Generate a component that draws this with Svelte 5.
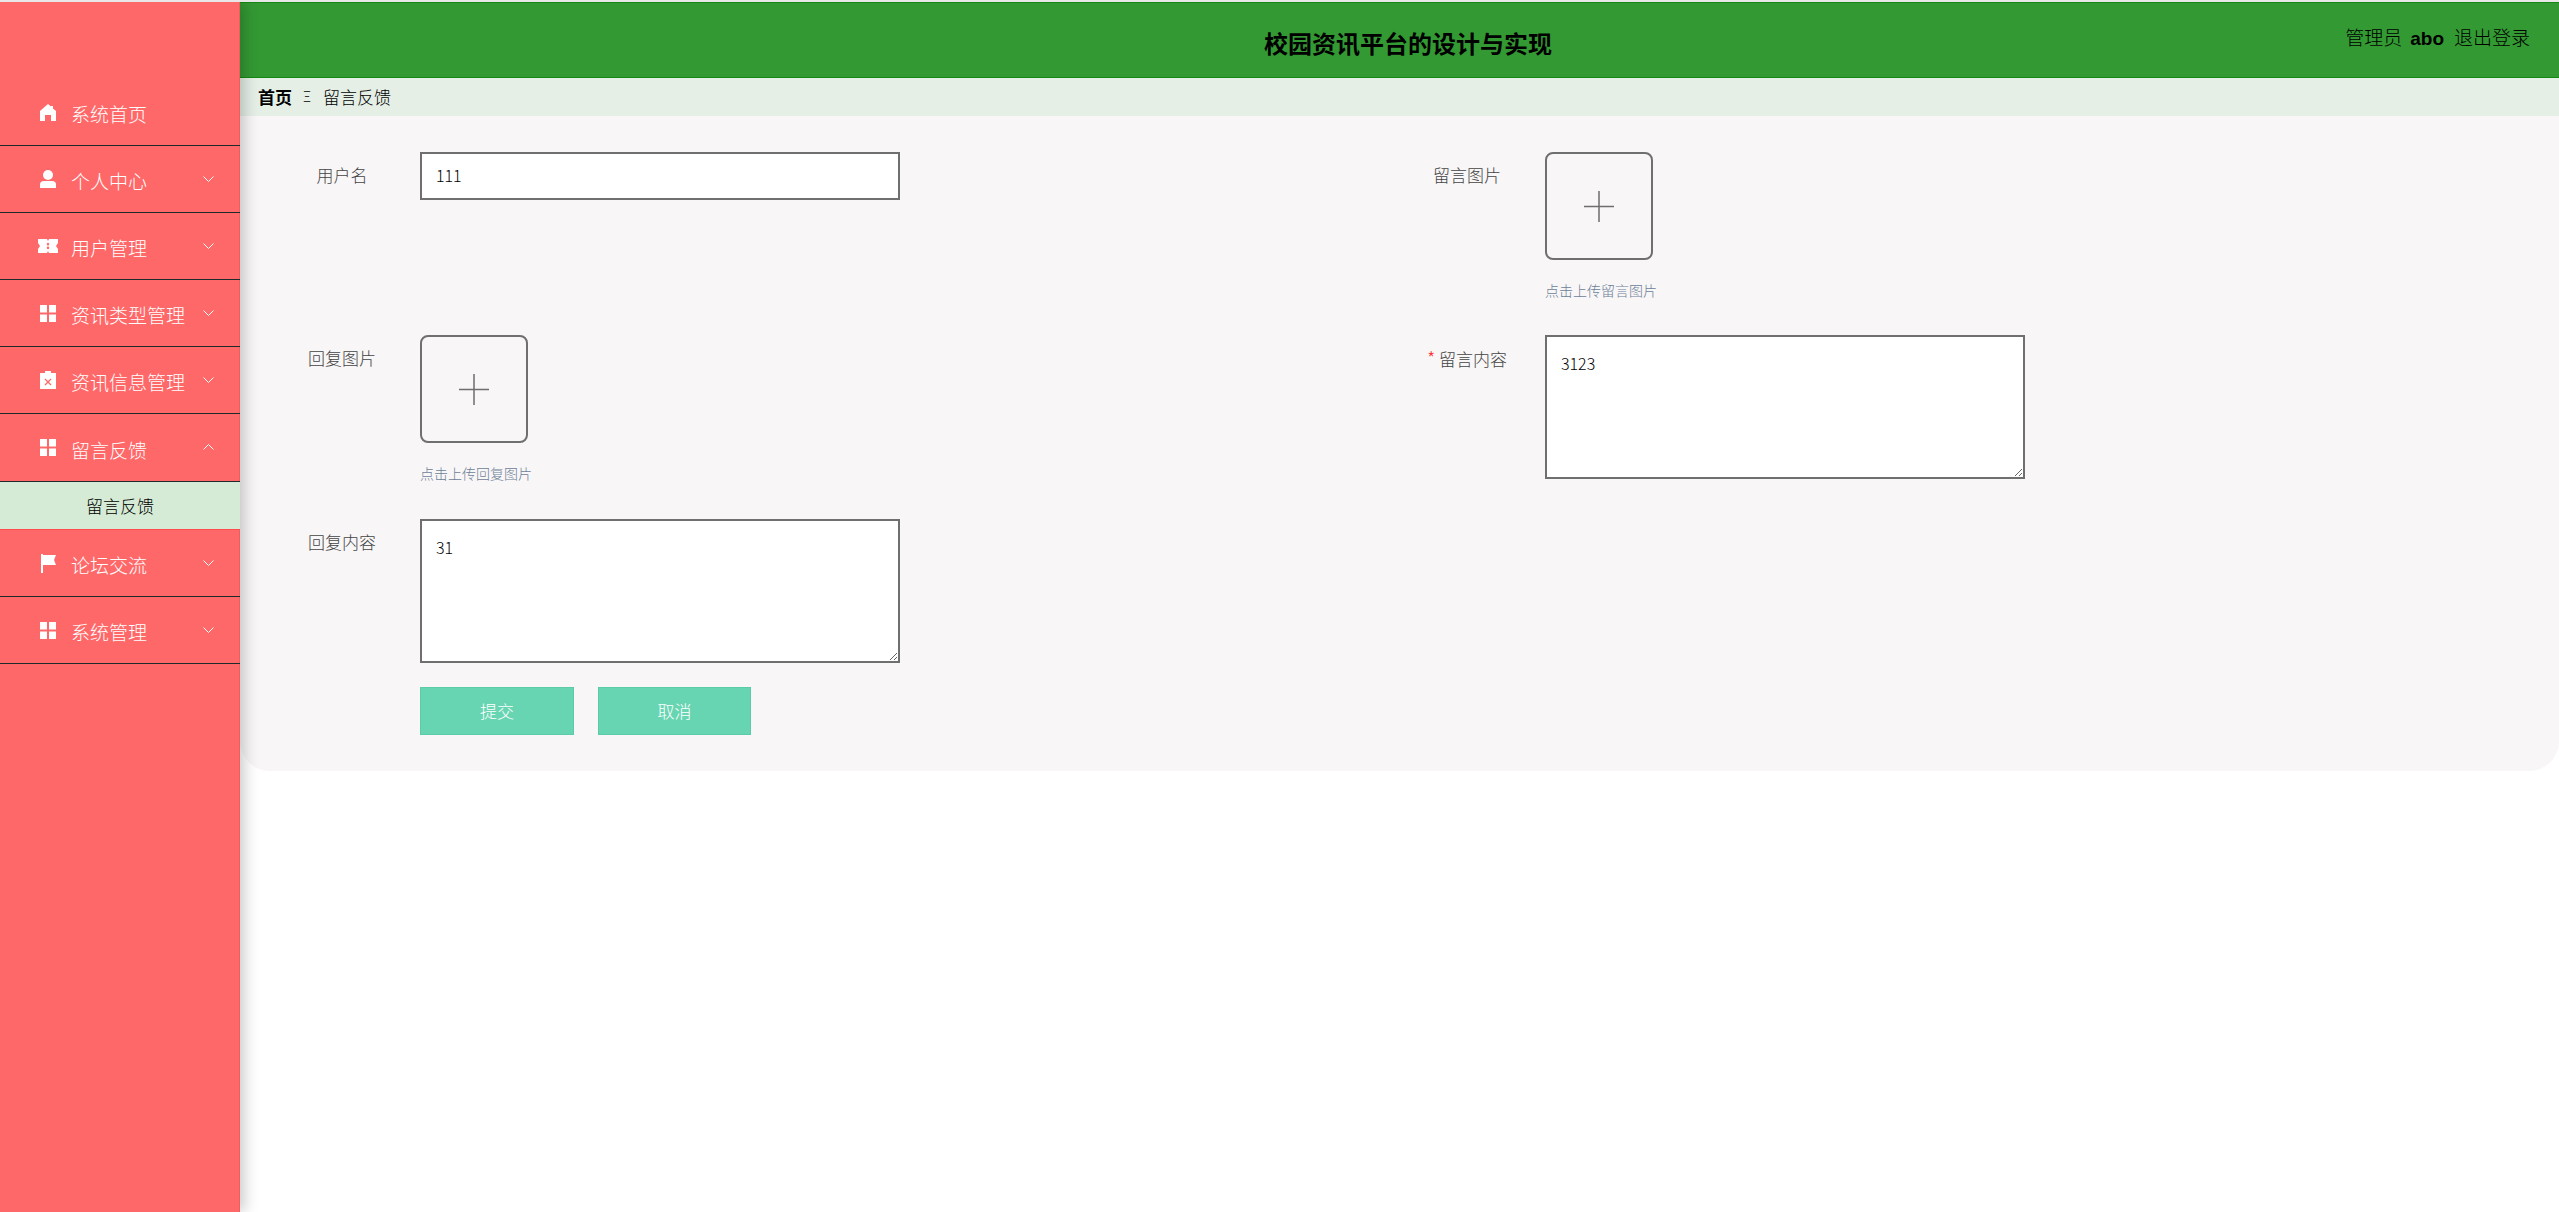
<script>
  const menu = [
    { label: '系统首页', icon: 'home', arrow: '' },
    { label: '个人中心', icon: 'user', arrow: 'down' },
    { label: '用户管理', icon: 'ticket', arrow: 'down' },
    { label: '资讯类型管理', icon: 'grid', arrow: 'down' },
    { label: '资讯信息管理', icon: 'clip', arrow: 'down' },
    { label: '留言反馈', icon: 'grid', arrow: 'up', sub: '留言反馈' },
    { label: '论坛交流', icon: 'flag', arrow: 'down' },
    { label: '系统管理', icon: 'grid', arrow: 'down' }
  ];
</script>

<div class="page">
  <aside class="sidebar">
    {#each menu as m}
      <div class="item">
        <span class="icon-slot">
          {#if m.icon === 'home'}
            <svg width="16" height="17" viewBox="0 0 16 17"><path fill="#fff" d="M8 0l3 2.6V2h2v2.4L16 7v10h-5v-6H5v6H0V7z"/></svg>
          {:else if m.icon === 'user'}
            <svg width="16" height="18" viewBox="0 0 16 18"><circle fill="#fff" cx="8" cy="5" r="5"/><path fill="#fff" d="M0 18v-3.5Q0 11 4 11h8q4 0 4 3.500V18z"/></svg>
          {:else if m.icon === 'ticket'}
            <svg width="20" height="14" viewBox="0 0 20 14"><path fill="#fff" fill-rule="evenodd" d="M0 0h20v4l-2 3 2 3v4H0v-4l2-3-2-3zM9 0l1 2 1-2zM8.500 5l1.500 2 1.500-2-1.500-1.500zM8.500 9l1.500 1.500L11.500 9 10 7zM9 14h2l-1-2z"/></svg>
          {:else if m.icon === 'grid'}
            <svg width="16" height="17" viewBox="0 0 16 17"><path fill="#fff" d="M0 0h7v7.500H0zM9 0h7v7.500H9zM0 9.500h7V17H0zM9 9.500h7V17H9z"/></svg>
          {:else if m.icon === 'clip'}
            <svg width="16" height="18" viewBox="0 0 16 18"><path fill="#fff" d="M0 2h5V0h6v2h5v16H0z"/><path stroke="#ff6868" stroke-width="1.300" fill="none" d="M5 8l6 6M11 8l-6 6"/></svg>
          {:else if m.icon === 'flag'}
            <svg width="16" height="19" viewBox="0 0 16 19"><path fill="#fff" d="M1 0h2v1h13l-2 5 2 5H3v8H1z"/></svg>
          {/if}
        </span>
        <span class="item-label">{m.label}</span>
        {#if m.arrow}
          <svg class="chev" width="11" height="6" viewBox="0 0 11 6">
            {#if m.arrow === 'down'}
              <path d="M.5.500l5 5 5-5" fill="none" stroke="#fff" stroke-width="1"/>
            {:else}
              <path d="M.5 5.500l5-5 5 5" fill="none" stroke="#fff" stroke-width="1"/>
            {/if}
          </svg>
        {/if}
      </div>
      {#if m.sub}
        <div class="sub">{m.sub}</div>
      {/if}
    {/each}
  </aside>

  <main class="main">
    <header class="header">
      <div class="title">校园资讯平台的设计与实现</div>
      <div class="user"><span>管理员</span><b>abo</b><span>退出登录</span></div>
    </header>
    <nav class="crumb">
      <b>首页</b><span class="sep">Ξ</span><span>留言反馈</span>
    </nav>
    <section class="panel">
      <form class="form">
        <div class="field">
          <span class="label">用户名</span>
          <input class="text" value="111" />
        </div>
        <div class="field">
          <span class="label">留言图片</span>
          <div class="upload-wrap">
            <div class="upload"><svg width="30" height="31" viewBox="0 0 30 31"><path d="M15 0v31M0 15.500h30" stroke="#6e6e6e" stroke-width="1.500" fill="none"/></svg></div>
            <div class="hint">点击上传留言图片</div>
          </div>
        </div>
        <div class="field">
          <span class="label">回复图片</span>
          <div class="upload-wrap second">
            <div class="upload"><svg width="30" height="31" viewBox="0 0 30 31"><path d="M15 0v31M0 15.500h30" stroke="#6e6e6e" stroke-width="1.500" fill="none"/></svg></div>
            <div class="hint">点击上传回复图片</div>
          </div>
        </div>
        <div class="field">
          <span class="label"><i>*</i> 留言内容</span>
          <textarea class="area">3123</textarea>
        </div>
        <div class="field">
          <span class="label">回复内容</span>
          <textarea class="area">31</textarea>
        </div>
        <div class="field empty"></div>
        <div class="actions">
          <button type="button">提交</button>
          <button type="button">取消</button>
        </div>
      </form>
    </section>
  </main>
</div>

<style>
  :global(body) {
    margin: 0;
    background: #fff;
    font-family: "Noto Sans CJK SC", "Noto Sans", sans-serif;
  }
  .page {
    display: flex;
    height: 100vh;
    box-sizing: border-box;
    border-top: 2px solid #e9e7e7;
    overflow: hidden;
  }
  .sidebar {
    width: 240px;
    flex: none;
    background: #ff6868;
    padding-top: 77px;
    position: relative;
    z-index: 2;
    box-shadow: inset -1px 0 0 #f25c5c, 4px 0 14px rgba(0, 0, 0, 0.22);
  }
  .item {
    height: 67.1px;
    box-sizing: border-box;
    border-bottom: 1px solid #1c2a2c;
    display: flex;
    align-items: center;
    padding-left: 38px;
    color: #fff;
    font-size: 19px;
    font-weight: 300;
    position: relative;
  }
  .icon-slot {
    width: 20px;
    display: flex;
    justify-content: center;
  }
  .item-label {
    margin-left: 13px;
    line-height: 1;
    margin-top: 3px;
  }
  .chev {
    margin-left: auto;
    margin-right: 26px;
    margin-top: -1px;
  }
  .sub {
    height: 48.4px;
    box-sizing: border-box;
    border-bottom: 1px solid #ff4d4d;
    background: #d6ebd6;
    color: #000;
    font-size: 17px;
    font-weight: 300;
    display: flex;
    align-items: center;
    justify-content: center;
  }
  .main {
    flex: 1;
    min-width: 0;
    display: flex;
    flex-direction: column;
  }
  .header {
    height: 76px;
    box-sizing: border-box;
    background: #339933;
    border-top: 1px solid #128a12;
    border-bottom: 1px solid #128a12;
    display: grid;
    grid-template-columns: 1fr auto 1fr;
    align-items: center;
    padding: 0 29px 0 46px;
    color: #000;
  }
  .title {
    grid-column: 2;
    font-size: 24px;
    font-weight: 700;
    margin-top: 4px;
  }
  .user {
    grid-column: 3;
    justify-self: end;
    display: flex;
    align-items: baseline;
    gap: 10px;
    font-size: 19px;
    font-weight: 300;
    margin-top: -8px;
  }
  .user b {
    font-family: "Liberation Sans", sans-serif;
    font-size: 19px;
    font-weight: 700;
    margin-left: -2px;
  }
  .crumb {
    height: 38px;
    background: #e5efe6;
    display: flex;
    align-items: center;
    padding-left: 18px;
    padding-bottom: 2px;
    box-sizing: border-box;
    font-size: 17px;
    color: #000;
    font-weight: 300;
  }
  .crumb b {
    font-weight: 700;
  }
  .sep {
    font-size: 14px;
    margin: 0 11px 0 11px;
    width: 9px;
  }
  .panel {
    background: #f8f6f7;
    border-radius: 0 0 30px 30px;
    padding: 36px 45px 36px 24px;
  }
  .form {
    display: grid;
    grid-template-columns: 1125px 1fr;
    row-gap: 24px;
  }
  .field {
    display: flex;
    align-items: flex-start;
  }
  .empty {
    display: block;
  }
  .label {
    width: 156px;
    flex: none;
    text-align: center;
    font-size: 17px;
    line-height: 46px;
    color: #444;
    font-weight: 300;
  }
  .label i {
    color: #f33;
    font-style: normal;
    font-size: 19px;
  }
  .text {
    width: 480px;
    height: 48px;
    box-sizing: border-box;
    border: 2px solid #6f6f6f;
    border-radius: 0;
    background: #fff;
    padding: 0 14px 2px;
    font: 300 16px "Noto Sans CJK SC", sans-serif;
    color: #000;
    outline: none;
  }
  .area {
    display: block;
    width: 480px;
    height: 144px;
    box-sizing: border-box;
    border: 2px solid #6f6f6f;
    border-radius: 0;
    background: #fff;
    padding: 14px 14px;
    font: 300 16px/24px "Noto Sans CJK SC", sans-serif;
    color: #000;
    outline: none;
    margin: 0;
  }
  .upload-wrap {
    height: 159px;
  }
  .upload-wrap.second {
    height: 160px;
  }
  .upload {
    width: 108px;
    height: 108px;
    box-sizing: border-box;
    border: 2px solid #6f6f6f;
    border-radius: 8px;
    display: flex;
    align-items: center;
    justify-content: center;
    padding-top: 1px;
  }
  .hint {
    font-size: 14px;
    line-height: 20px;
    margin-top: 20px;
    color: #6d7e96;
    font-weight: 300;
  }
  .actions {
    grid-column: 1 / -1;
    padding-left: 156px;
    display: flex;
    gap: 24px;
  }
  .actions button {
    width: 154px;
    height: 48px;
    box-sizing: border-box;
    background: #68d5b2;
    border: 1px solid #5ccca8;
    color: #fff;
    font: 300 17px "Noto Sans CJK SC", sans-serif;
    padding: 0 0 2px;
  }
  .actions button + button {
    width: 153px;
  }
</style>
